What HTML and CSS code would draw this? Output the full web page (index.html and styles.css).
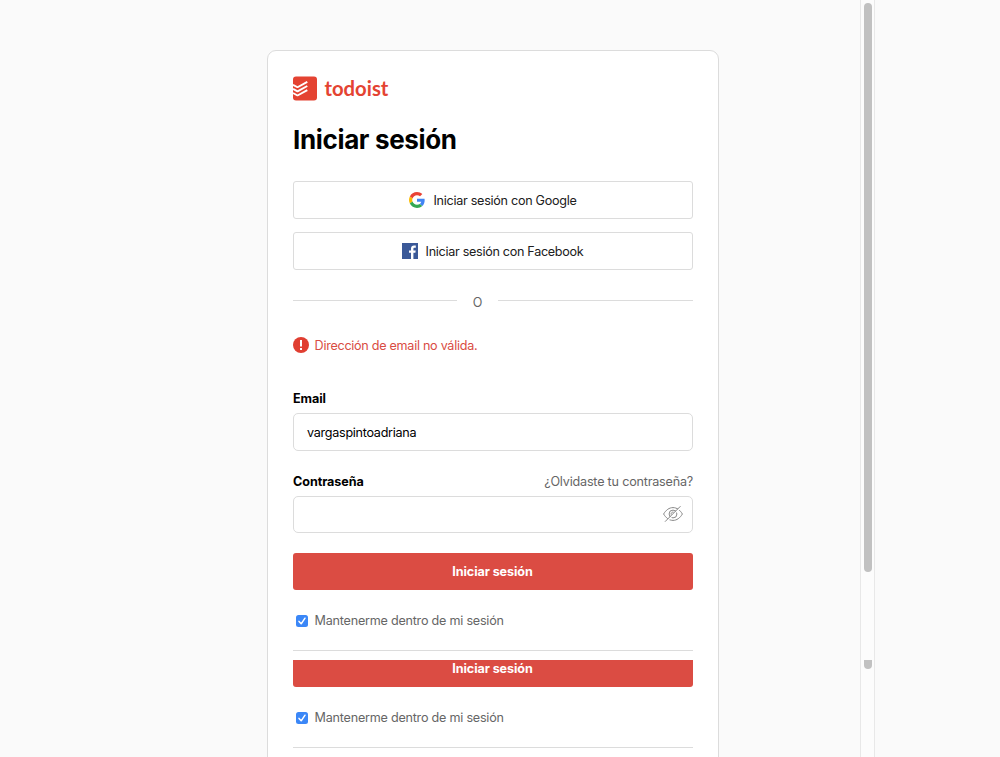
FILE: index.html
```html
<!DOCTYPE html>
<html lang="es">
<head>
<meta charset="utf-8">
<title>Iniciar sesión - Todoist</title>
<link rel="stylesheet" href="styles.css">
</head>
<body>
<div class="page">
  <main class="content">
    <div class="card">
      <div class="logo">
        <svg class="logo-mark" width="24" height="25" viewBox="0 0 24 25"><rect y=".4" width="24" height="24.2" rx="3" fill="#e44332"/><path d="M0 8.800l4 2.200q.5.300 1 0l9.300-5.100M0 12.900l4 2.200q.5.300 1 0l9.300-5.100M0 17l4 2.200q.5.300 1 0l9.300-5.100" fill="none" stroke="#fff" stroke-width="1.900"/></svg>
        <span class="logo-word">todoist</span>
      </div>
      <h1>Iniciar sesión</h1>
      <a class="social google">
        <svg width="16" height="16" viewBox="0 0 48 48"><path fill="#ea4335" d="M24 9.5c3.5 0 6.700 1.200 9.200 3.600l6.900-6.900C35.900 2.400 30.500 0 24 0 14.600 0 6.500 5.400 2.600 13.200l8 6.200C12.400 13.700 17.700 9.500 24 9.500z"/><path fill="#4285f4" d="M47 24.500c0-1.600-.2-3.100-.4-4.500H24v9h12.900c-.6 3-2.200 5.500-4.700 7.200l7.700 6C44.400 38 47 31.800 47 24.500z"/><path fill="#fbbc05" d="M10.500 28.600c-.5-1.500-.8-3-.8-4.600s.3-3.100.8-4.600l-8-6.200C.9 16.500 0 20.100 0 24s.9 7.500 2.600 10.800z"/><path fill="#34a853" d="M24 48c6.500 0 11.900-2.100 15.900-5.800l-7.700-6c-2.200 1.500-4.900 2.300-8.200 2.300-6.300 0-11.600-4.200-13.500-9.900l-8 6.200C6.500 42.600 14.600 48 24 48z"/></svg>
        <span>Iniciar sesión con Google</span>
      </a>
      <a class="social facebook">
        <svg width="16" height="16" viewBox="0 0 16 16"><path fill="#3b5998" d="M0 0h16v16H0z"/><path fill="#fff" d="M9 16V9.800H7V7.400h2V5.600C9 3.600 10.200 2.500 12 2.500c.9 0 1.600.1 1.800.1v2.100h-1.200c-1 0-1.200.5-1.200 1.200v1.500h2.300l-.3 2.400h-2V16z"/></svg>
        <span>Iniciar sesión con Facebook</span>
      </a>
      <div class="separator"><i class="rule-left"></i><span>O</span><i class="rule-right"></i></div>
      <div class="error">
        <svg width="16" height="16" viewBox="0 0 16 16"><circle cx="8" cy="8" r="8" fill="#e03e31"/><path d="M7 3h2v6.500H7zM7 11h2v2H7z" fill="#fff"/></svg>
        <span>Dirección de email no válida.</span>
      </div>
      <div class="label-row email-label"><b>Email</b></div>
      <div class="field"><span>vargaspintoadriana</span></div>
      <div class="label-row password-label"><b>Contraseña</b><a>¿Olvidaste tu contraseña?</a></div>
      <div class="field password">
        <svg width="20" height="18" viewBox="0 0 20 18" fill="none" stroke="#888" stroke-width="1"><path d="M.6 9C3 5 6.200 2.600 10 2.600S17 5 19.400 9C17 13 13.800 15.400 10 15.400S3 13 .6 9z"/><circle cx="10" cy="9" r="3.900"/><path d="M8.200 9.600A1.900 1.900 0 0 1 10.600 7.200"/><path d="M3.200 17L18.300 1.800" stroke="#fff" stroke-width="1.200"/><path d="M2 16.700L17.500 1.200"/></svg>
      </div>
      <div class="submit"><span>Iniciar sesión</span></div>
      <div class="remember"><svg width="12" height="12" viewBox="0 0 12 12"><rect width="12" height="12" rx="2.500" fill="#3b87f7"/><path d="M3 6.400l2.200 2.400L9 3.200" fill="none" stroke="#fff" stroke-width="1.500" stroke-linecap="round" stroke-linejoin="round"/></svg><span>Mantenerme dentro de mi sesión</span></div>
      <div class="rule"></div>
      <div class="submit repeated"><span>Iniciar sesión</span></div>
      <div class="remember"><svg width="12" height="12" viewBox="0 0 12 12"><rect width="12" height="12" rx="2.500" fill="#3b87f7"/><path d="M3 6.400l2.200 2.400L9 3.200" fill="none" stroke="#fff" stroke-width="1.500" stroke-linecap="round" stroke-linejoin="round"/></svg><span>Mantenerme dentro de mi sesión</span></div>
      <div class="rule"></div>
    </div>
  </main>
  <div class="scrollbar"><div class="thumb"></div><div class="thumb-end"></div></div>
</div>
</body>
</html>
```
FILE: styles.css
```css
* { box-sizing: border-box; }
body {
  margin: 0;
  background: #fafafa;
  color: #202020;
  font: 12.6px/18px Inter, "Liberation Sans", sans-serif;
  letter-spacing: -0.28px;
  overflow: hidden;
}
svg { display: block; flex: none; }
span, b, a { white-space: nowrap; }
.page { display: flex; height: 757px; overflow: hidden; }
.content { width: 860px; padding: 50px 0 0 267px; }
.card {
  width: 452px;
  height: 760px;
  padding: 25px;
  background: #fff;
  border: 1px solid #dcdcdc;
  border-radius: 9px;
}
.logo { display: flex; align-items: center; height: 25px; gap: 7.5px; }
.logo-word {
  margin-top: -2px;
  font: 700 20.3px/24px Lato, sans-serif;
  letter-spacing: 0;
  color: #e44332;
}
h1 {
  margin: 23px 0 25px;
  font-size: 26px;
  line-height: 32px;
  font-weight: 700;
  letter-spacing: -0.35px;
  color: #000;
}
.social {
  display: flex;
  align-items: center;
  justify-content: center;
  gap: 8px;
  height: 38px;
  border: 1px solid #dcdcdc;
  border-radius: 3px;
}
.social span, .field span { margin-top: 2px; }
.facebook { margin-top: 13px; padding-right: 1px; letter-spacing: -0.3px; }
.separator { display: flex; align-items: center; height: 16px; margin-top: 23px; color: #666; }
.separator i { height: 1px; background: #dcdcdc; margin-bottom: 1px; }
.rule-left { width: 164px; }
.rule-right { width: 195px; }
.separator span { width: 41px; text-align: center; padding-top: 4px; }
.error { display: flex; gap: 5.6px; margin-top: 28px; height: 16px; color: #d94c43; }
.label-row { display: flex; justify-content: space-between; height: 16px; color: #000; }
.label-row a { color: #666; letter-spacing: -0.2px; }
.label-row b { letter-spacing: -0.08px; }
.email-label { margin-top: 37px; }
.password-label { margin-top: 22px; }
.field {
  display: flex;
  align-items: center;
  height: 38px;
  margin-top: 7px;
  padding: 0 13px;
  border: 1px solid #dcdcdc;
  border-radius: 5px;
  color: #000;
}
.password { height: 37px; justify-content: flex-end; padding: 0 9px 2px; }
.submit {
  display: flex;
  align-items: center;
  justify-content: center;
  height: 37px;
  margin-top: 20px;
  padding: 1px 1px 0 0;
  background: #db4c43;
  border-radius: 3px;
  color: #fff;
  font-weight: 700;
  letter-spacing: -0.08px;
}
.remember { display: flex; align-items: center; gap: 6.6px; height: 16px; margin: 23px 0 0 3px; color: #666; letter-spacing: -0.23px; }
.remember span { margin-top: -1px; }
.rule { height: 1px; margin-top: 21px; background: #dcdcdc; }
.repeated { margin-top: 9px; height: 27px; padding-top: 0; align-items: flex-start; border-radius: 0 0 3px 3px; }
.scrollbar { width: 15px; border: solid #e8e8e8; border-width: 0 1px; padding: 3px 0 0 3px; background: #fcfcfc; }
.thumb { width: 8px; height: 569px; border-radius: 4px; background: #c1c1c1; }
.thumb-end { width: 8px; height: 9px; margin-top: 88px; border-radius: 0 0 4px 4px; background: #c1c1c1; }
```
